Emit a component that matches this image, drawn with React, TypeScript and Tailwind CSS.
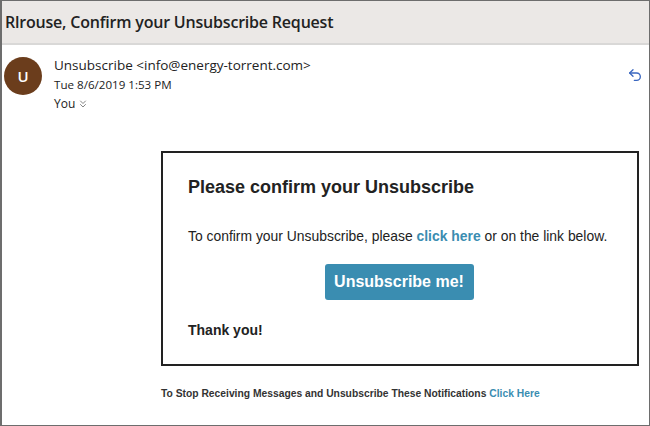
import React from 'react';
import { Undo2, ChevronsDown } from 'lucide-react';

export default function App() {
  return (
    <div className="w-[650px] h-[426px] overflow-hidden bg-white border border-l-2 border-[#6d6d6d] flex flex-col">
      <div className="h-[44px] shrink-0 bg-[#ebe8e6] border-b-2 border-[#d9d8d7] flex items-center px-[3px]">
        <h1 className="font-['Open_Sans',sans-serif] font-semibold text-[16px] text-[#222] tracking-[-0.2px]">
          Rlrouse, Confirm your Unsubscribe Request
        </h1>
      </div>

      <div className="flex items-start pt-[12px] pr-[4px]">
        <div className="ml-[2px] w-[38px] h-[38px] rounded-full bg-[#6b3d1c] flex items-center justify-center text-white font-['Open_Sans',sans-serif] font-semibold text-[15px]">
          U
        </div>
        <div className="ml-[12px] flex-1 font-['Open_Sans',sans-serif] text-[#222]">
          <div className="text-[13.5px] leading-[18px] -mt-[1px]">Unsubscribe &lt;info@energy-torrent.com&gt;</div>
          <div className="text-[11.6px] leading-[18px] mt-[2px]">Tue 8/6/2019 1:53 PM</div>
          <div className="text-[12px] leading-[18px] mt-[1px] flex items-center gap-[2px]">
            You <ChevronsDown className="w-[12px] h-[12px] text-[#666]" strokeWidth={1.6} />
          </div>
        </div>
        <Undo2 className="w-[16px] h-[16px] text-[#3a67c0] mt-[10px] mr-[2px]" strokeWidth={2} />
      </div>

      <div className="ml-[159px] mt-[38px] w-[478px] border-2 border-[#222] font-['Liberation_Sans',Arial,sans-serif] text-[#222] px-[25px] pt-[24px] pb-[24px]">
        <h2 className="font-bold text-[18px] leading-[20px]">Please confirm your Unsubscribe</h2>
        <p className="mt-[29px] text-[13.9px] leading-[20px]">
          To confirm your Unsubscribe, please{' '}
          <a className="font-bold text-[#3a8db1]">click here</a> or on the link below.
        </p>
        <div className="mt-[18px] flex justify-center">
          <button className="h-[36px] w-[149px] rounded-[3px] bg-[#3a8db1] text-white font-bold text-[16px] ml-[-2px]">
            Unsubscribe me!
          </button>
        </div>
        <p className="mt-[20px] font-bold text-[14px] leading-[20px]">Thank you!</p>
      </div>

      <p className="ml-[159px] mt-[21px] font-['Liberation_Sans',Arial,sans-serif] font-bold text-[10.3px] leading-[14px] text-[#333]">
        To Stop Receiving Messages and Unsubscribe These Notifications{' '}
        <a className="text-[#3a8db1]">Click Here</a>
      </p>
    </div>
  );
}
